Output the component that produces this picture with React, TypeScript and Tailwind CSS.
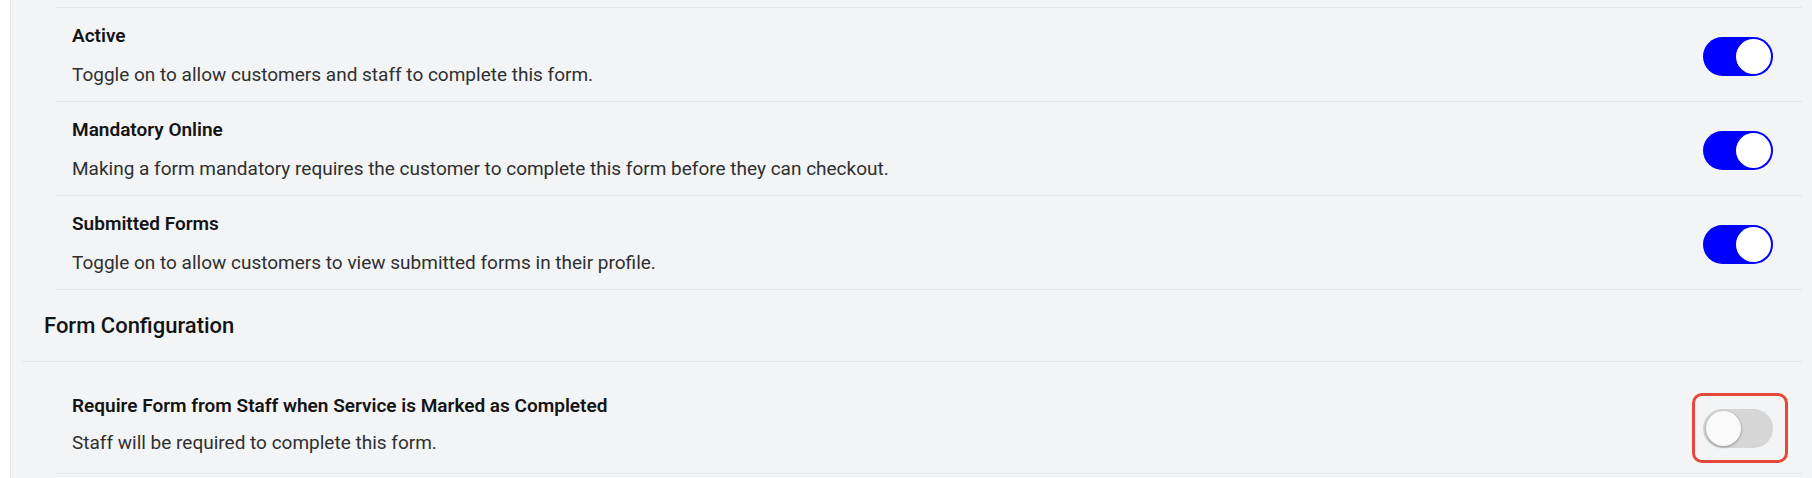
import React from "react";

type Setting = {
  title: string;
  description: string;
  on: boolean;
};

const settings: Setting[] = [
  {
    title: "Active",
    description: "Toggle on to allow customers and staff to complete this form.",
    on: true,
  },
  {
    title: "Mandatory Online",
    description:
      "Making a form mandatory requires the customer to complete this form before they can checkout.",
    on: true,
  },
  {
    title: "Submitted Forms",
    description: "Toggle on to allow customers to view submitted forms in their profile.",
    on: true,
  },
];

function Toggle({ on }: { on: boolean }) {
  return (
    <button
      type="button"
      role="switch"
      aria-checked={on}
      className={`flex h-[39px] w-[70px] items-center rounded-full p-[2px] ${
        on ? "justify-end bg-[#0000ff]" : "justify-start bg-[#d6d6d6] pl-[3px]"
      }`}
    >
      <span
        className={`block h-[35px] w-[35px] rounded-full ${
          on ? "bg-white" : "bg-[#fafafa] shadow-[0_1px_3px_rgba(0,0,0,0.35)]"
        }`}
      />
    </button>
  );
}

function SettingRow({ title, description, on }: Setting) {
  return (
    <div className="flex items-start justify-between border-b border-[#e4e6ea]">
      <div className="pl-4 pt-4 pb-[14px]">
        <div className="text-[19px] leading-6 font-semibold text-[#141414]">{title}</div>
        <div className="mt-[15px] text-[19px] leading-6 text-[#2f2f2f]">{description}</div>
      </div>
      <div className="mr-[29px] mt-[29px]">
        <Toggle on={on} />
      </div>
    </div>
  );
}

export default function App() {
  return (
    <div className="flex h-[478px] w-full overflow-hidden bg-white font-['Roboto',sans-serif]">
      {/* left gutter */}
      <div className="w-[11px] shrink-0 border-r border-[#e3e5e8] bg-white" />

      {/* main panel */}
      <div className="flex-1 bg-[#f3f4f6] pr-[10px] pt-[7px]">
        <div className="ml-[45px] border-t border-[#e4e6ea]">
          {settings.map((s) => (
            <SettingRow key={s.title} {...s} />
          ))}
        </div>

        <div className="ml-[11px] border-b border-[#e4e6ea] pl-[22px] pt-[22px] pb-[21px]">
          <h2 className="text-[22px] leading-7 font-medium text-[#141414]">Form Configuration</h2>
        </div>

        <div className="ml-[45px] flex items-start justify-between border-b border-[#e4e6ea]">
          <div className="pl-4 pt-[32px] pb-[18px]">
            <div className="text-[19px] leading-6 font-semibold text-[#141414]">
              Require Form from Staff when Service is Marked as Completed
            </div>
            <div className="mt-[13px] text-[19px] leading-6 text-[#2f2f2f]">
              Staff will be required to complete this form.
            </div>
          </div>
          <div className="relative mr-[29px] mt-[47px]">
            <Toggle on={false} />
            <div className="pointer-events-none absolute -top-[16px] -bottom-[15px] -left-[11px] -right-[15px] rounded-[10px] border-[3px] border-[#e4483a]" />
          </div>
        </div>
      </div>
    </div>
  );
}
